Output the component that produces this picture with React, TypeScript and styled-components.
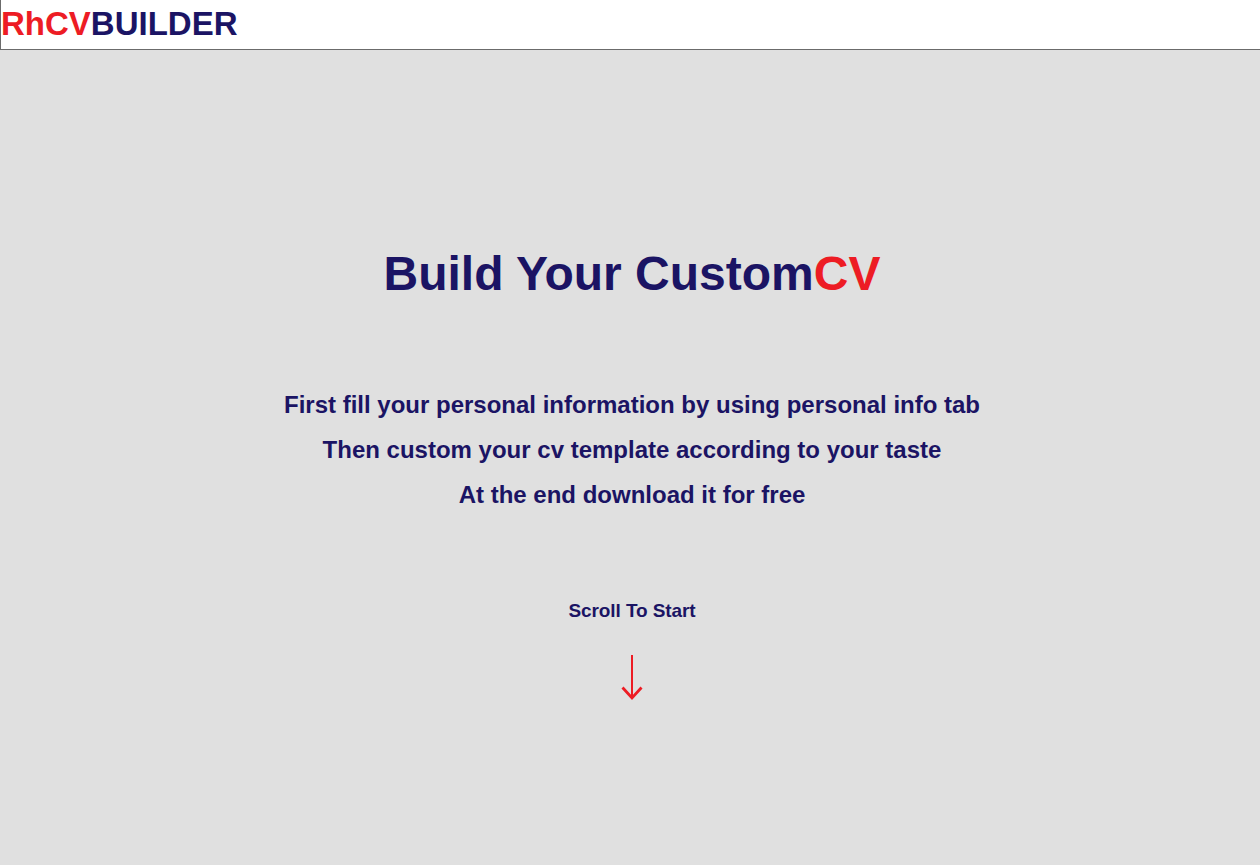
import React from "react";
import styled, { createGlobalStyle } from "styled-components";

const GlobalStyle = createGlobalStyle`
  html, body { margin: 0; padding: 0; }
  body {
    background: #e0e0e0;
    font-family: "Liberation Sans", Arial, sans-serif;
    color: #1b1464;
  }
`;

const Page = styled.div`
  min-height: 865px;
  display: flex;
  flex-direction: column;
`;

const Header = styled.header`
  height: 49px;
  background: #ffffff;
  border-left: 1px solid #6b6b6b;
  border-bottom: 1px solid #6b6b6b;
  display: flex;
  align-items: center;
`;

const Logo = styled.div`
  font-size: 33px;
  font-weight: 700;
  line-height: 1;
  margin-top: -2px;
`;

const Red = styled.span`
  color: #ed1c24;
`;

const Navy = styled.span`
  color: #1b1464;
`;

const Hero = styled.main`
  display: flex;
  flex-direction: column;
  align-items: center;
  padding-top: 196px;
  padding-left: 4px;
`;

const Title = styled.h1`
  margin: 0;
  font-size: 48px;
  font-weight: 700;
  line-height: 56px;
`;

const Steps = styled.div`
  margin-top: 89px;
  display: flex;
  flex-direction: column;
  align-items: center;
  gap: 17px;
`;

const Step = styled.p`
  margin: 0;
  font-size: 24px;
  font-weight: 700;
  line-height: 28px;
`;

const ScrollLabel = styled.div`
  margin-top: 90px;
  font-size: 19px;
  font-weight: 700;
  line-height: 24px;
  letter-spacing: -0.1px;
`;

const ArrowWrap = styled.div`
  margin-top: 30px;
  width: 24px;
  height: 48px;
  display: flex;
  justify-content: center;
`;

export default function App() {
  return (
    <>
      <GlobalStyle />
      <Page>
        <Header>
          <Logo>
            <Red>RhCV</Red>
            <Navy>BUILDER</Navy>
          </Logo>
        </Header>
        <Hero>
          <Title>
            Build Your Custom<Red>CV</Red>
          </Title>
          <Steps>
            <Step>First fill your personal information by using personal info tab</Step>
            <Step>Then custom your cv template according to your taste</Step>
            <Step>At the end download it for free</Step>
          </Steps>
          <ScrollLabel>Scroll To Start</ScrollLabel>
          <ArrowWrap>
            <svg width="24" height="48" viewBox="0 0 24 48">
              <line x1="12" y1="2" x2="12" y2="44" stroke="#ed1c24" strokeWidth="2" />
              <path d="M2.5 34.5 L12 45 L21.5 34.5" fill="none" stroke="#ed1c24" strokeWidth="2.8" />
            </svg>
          </ArrowWrap>
        </Hero>
      </Page>
    </>
  );
}
